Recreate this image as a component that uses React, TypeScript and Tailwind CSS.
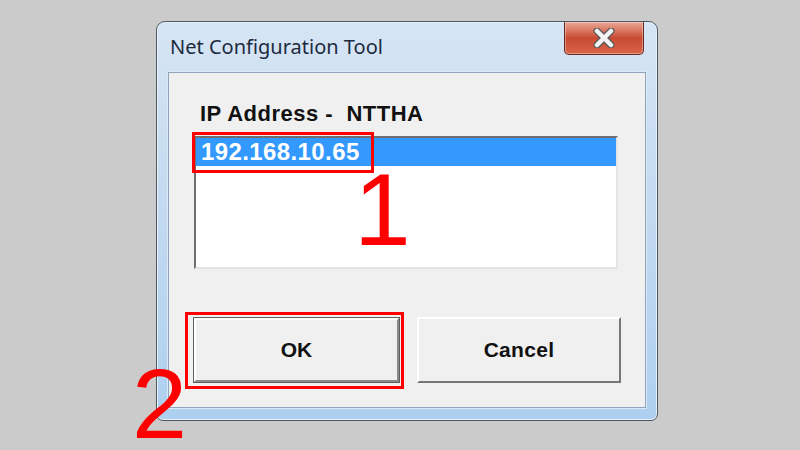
export default function App() {
  return (
    <div
      className="relative w-[800px] h-[450px] overflow-hidden bg-[#cbcbcb] pl-[156px] pt-[21px]"
      style={{ fontFamily: '"Liberation Sans", Arial, sans-serif' }}
    >
      {/* Window */}
      <div className="flex h-[400px] w-[502px] flex-col rounded-t-[9px] rounded-b-[7px] border border-[#4f5964] bg-gradient-to-b from-[#d6e5f4] via-[#c2d9f0] to-[#add0f0] shadow-[inset_0_0_0_1px_#e8f1fa]">
        {/* Title bar */}
        <div className="flex h-[50px] items-start justify-between">
          <span
            className="pl-[13px] pt-[12px] text-[20px] leading-[26px] text-[#1c2a3f]"
            style={{ fontFamily: '"Noto Sans", "Open Sans", sans-serif' }}
          >
            Net Configuration Tool
          </span>
          <button className="mr-[13px] flex h-[33px] w-[80px] items-center justify-center rounded-b-[5px] border border-t-0 border-[#6b2a22] bg-gradient-to-b from-[#e9a796] via-[#c94a33] to-[#d8654a] shadow-[inset_0_0_0_1px_rgba(255,255,255,0.35)]">
            <svg width="26" height="20" viewBox="0 0 26 20">
              <path d="M6 3 L20 17 M20 3 L6 17" stroke="#5a5a5a" strokeWidth="7" strokeLinecap="round" />
              <path d="M6 3 L20 17 M20 3 L6 17" stroke="#f4f4f4" strokeWidth="4.5" strokeLinecap="round" />
            </svg>
          </button>
        </div>

        {/* Client area */}
        <div className="mx-[11px] mb-[12px] flex-1 border border-[#8fa4bb] bg-[#f0f0f0] shadow-[0_0_0_1px_#dbe9f7]">
          <div className="ml-[31px] mt-[28px] whitespace-pre text-[22px] font-bold leading-[26px] tracking-[0.5px] text-[#111]">
            IP Address -  NTTHA
          </div>

          {/* List box */}
          <div className="ml-[25px] mt-[9px] h-[133px] w-[424px] border-2 border-b-[#e4e4e4] border-l-[#6e6e6e] border-r-[#e4e4e4] border-t-[#6e6e6e] bg-white">
            <div className="h-[28px] bg-[#3399ff] pl-[5px] text-[24px] font-bold leading-[28px] tracking-[0.4px] text-white">
              192.168.10.65
            </div>
          </div>

          {/* Buttons */}
          <div className="ml-[24px] mt-[48px] flex gap-[17px]">
            <button className="h-[66px] w-[207px] border border-[#5e5e5e] bg-[#f0f0f0]">
              <div className="flex h-full w-full items-center justify-center border-2 border-b-[#8a8a8a] border-l-white border-r-[#8a8a8a] border-t-white text-[21px] font-bold text-[#111]">
                OK
              </div>
            </button>
            <button className="flex h-[66px] w-[204px] items-center justify-center border-2 border-b-[#777] border-l-white border-r-[#777] border-t-white bg-[#f0f0f0] text-[21px] font-bold tracking-[0.3px] text-[#111]">
              Cancel
            </button>
          </div>
        </div>
      </div>

      {/* Annotations */}
      <div className="absolute left-[192px] top-[132px] h-[41px] w-[182px] border-[3px] border-[#ff0000]" />
      <div className="absolute left-[354px] top-[170px] text-[102px] leading-[80px] text-[#ff0000]">1</div>
      <div className="absolute left-[185px] top-[312px] h-[77px] w-[219px] border-[3px] border-[#ff0000]" />
      <div className="absolute left-[132px] top-[364px] text-[99px] leading-[80px] text-[#ff0000]">2</div>
    </div>
  );
}
